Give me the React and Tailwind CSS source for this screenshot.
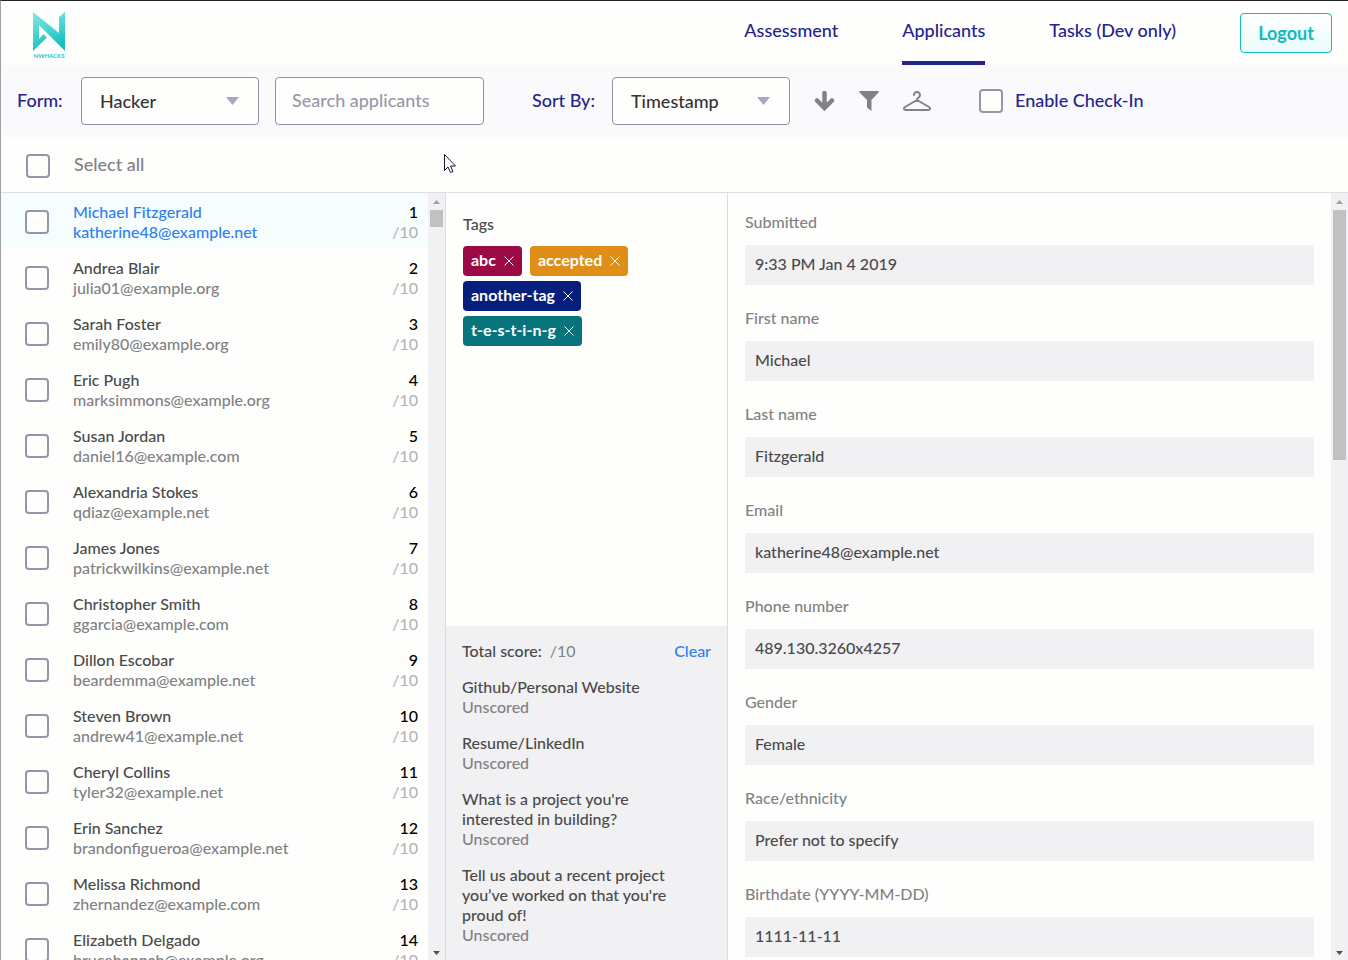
import React, { useState } from "react";

const applicants = [
  { name: "Michael Fitzgerald", email: "katherine48@example.net" },
  { name: "Andrea Blair", email: "julia01@example.org" },
  { name: "Sarah Foster", email: "emily80@example.org" },
  { name: "Eric Pugh", email: "marksimmons@example.org" },
  { name: "Susan Jordan", email: "daniel16@example.com" },
  { name: "Alexandria Stokes", email: "qdiaz@example.net" },
  { name: "James Jones", email: "patrickwilkins@example.net" },
  { name: "Christopher Smith", email: "ggarcia@example.com" },
  { name: "Dillon Escobar", email: "beardemma@example.net" },
  { name: "Steven Brown", email: "andrew41@example.net" },
  { name: "Cheryl Collins", email: "tyler32@example.net" },
  { name: "Erin Sanchez", email: "brandonfigueroa@example.net" },
  { name: "Melissa Richmond", email: "zhernandez@example.com" },
  { name: "Elizabeth Delgado", email: "brucehannah@example.org" },
];

const tags = [
  { label: "abc", color: "bg-[#9b0a45]" },
  { label: "accepted", color: "bg-[#df8f18]" },
  { label: "another-tag", color: "bg-[#061f7c]" },
  { label: "t-e-s-t-i-n-g", color: "bg-[#06747a]" },
];

const questions = [
  "Github/Personal Website",
  "Resume/LinkedIn",
  "What is a project you're interested in building?",
  "Tell us about a recent project you’ve worked on that you're proud of!",
];

const fields = [
  { id: "submitted", label: "Submitted", value: "9:33 PM Jan 4 2019" },
  { id: "firstName", label: "First name", value: "Michael" },
  { id: "lastName", label: "Last name", value: "Fitzgerald" },
  { id: "email", label: "Email", value: "katherine48@example.net" },
  { id: "phone", label: "Phone number", value: "489.130.3260x4257" },
  { id: "gender", label: "Gender", value: "Female" },
  { id: "race", label: "Race/ethnicity", value: "Prefer not to specify" },
  { id: "birthdate", label: "Birthdate (YYYY-MM-DD)", value: "1111-11-11" },
];

function Logo() {
  return (
    <svg width="34" height="48" viewBox="0 0 34 48" aria-label="nwHacks">
      <defs>
        <linearGradient id="logo" x1="0" y1="0" x2="0.3" y2="1">
          <stop offset="0" stopColor="#84e6e3" />
          <stop offset="0.5" stopColor="#4fd6d5" />
          <stop offset="1" stopColor="#14bfc0" />
        </linearGradient>
      </defs>
      <path
        fill="url(#logo)"
        d="M1 0L27 21V5L33 0V39L7 13V27L11.500 22L15 25.500L1 39Z"
      />
      <text
        x="17"
        y="46"
        textAnchor="middle"
        fontSize="6"
        fontWeight="700"
        fill="#2cc5c5"
      >
        NWHACKS
      </text>
    </svg>
  );
}

function Checkbox({ id, label }) {
  return (
    <input
      id={id}
      type="checkbox"
      aria-label={label}
      className="h-6 w-6 shrink-0 appearance-none rounded border-2 border-[#9496aa] bg-[#fefefd] checked:bg-[#23238e]"
    />
  );
}

function Dropdown({ id, options }) {
  return (
    <div className="relative">
      <select
        id={id}
        className="h-12 w-[178px] appearance-none rounded border border-[#8f91ac] bg-[#fefefd] pl-[18px] text-lg text-[#333]"
      >
        {options.map((option) => (
          <option key={option}>{option}</option>
        ))}
      </select>
      <svg
        className="pointer-events-none absolute top-5 right-5"
        width="13"
        height="8"
        viewBox="0 0 13 8"
        fill="#a5a7c0"
      >
        <path d="M0 0h13L6.500 8z" />
      </svg>
    </div>
  );
}

function Scrollbar({ thumb }) {
  return (
    <div className="flex w-[17px] shrink-0 flex-col items-center bg-[#f1f1f3]">
      <div className="flex h-[17px] items-center">
        <svg width="7" height="4" viewBox="0 0 7 4" fill="#a0a0a0">
          <path d="M0 4h7L3.500 0z" />
        </svg>
      </div>
      <div className={"w-[13px] bg-[#c1c1c3] " + thumb} />
      <div className="mt-auto flex h-[15px] items-center">
        <svg width="7" height="4" viewBox="0 0 7 4" fill="#505050">
          <path d="M0 0h7L3.500 4z" />
        </svg>
      </div>
    </div>
  );
}

function Header() {
  const link = "flex h-16 border-b-4 pt-[15px] leading-7";
  return (
    <header className="flex h-16 shrink-0 justify-between pr-4 pl-[31px]">
      <a href="#home" className="pt-[11px]">
        <Logo />
      </a>
      <div className="flex gap-16">
        <nav className="flex gap-16 text-lg text-[#23238e]">
          <a href="#assessment" className={link + " border-transparent"}>
            Assessment
          </a>
          <a href="#applicants" className={link + " border-[#23238e]"}>
            Applicants
          </a>
          <a href="#tasks" className={link + " border-transparent"}>
            Tasks (Dev only)
          </a>
        </nav>
        <button className="mt-3 h-10 w-[92px] rounded border border-[#12bcbc] bg-linear-to-b from-white to-[#e9fcfb] text-lg font-bold text-[#12bcbc]">
          Logout
        </button>
      </div>
    </header>
  );
}

function Toolbar() {
  return (
    <div className="flex h-[72px] shrink-0 items-center bg-[#fafafd] pl-4 text-lg text-[#23238e]">
      <label htmlFor="form" className="w-16 pb-0.5">
        Form:
      </label>
      <Dropdown id="form" options={["Hacker", "Mentor", "Volunteer"]} />
      <input
        type="text"
        aria-label="Search applicants"
        placeholder="Search applicants"
        className="ml-4 h-12 w-[209px] rounded border border-[#8f91ac] bg-[#fefefd] px-4 pb-0.5 text-lg placeholder:text-[#9798a8]"
      />
      <label htmlFor="sort" className="ml-12 w-20 pb-0.5">
        Sort By:
      </label>
      <Dropdown id="sort" options={["Timestamp", "Name", "Email"]} />
      <div className="ml-6 flex items-center gap-6 text-[#828284]">
        <button aria-label="Sort direction">
          <svg width="21" height="20" viewBox="0 0 21 20" fill="none">
            <path
              d="M10.500 2v14M3 9.500l7.500 7.500 7.500-7.500"
              stroke="currentColor"
              strokeWidth="4.500"
              strokeLinecap="round"
            />
          </svg>
        </button>
        <button aria-label="Filter">
          <svg width="20" height="20" viewBox="0 0 20 20" fill="currentColor">
            <path d="M1 0h18c.8 0 1 .9.500 1.400L12.500 9v11L8 16.500V9L.5 1.400C0 .9.200 0 1 0z" />
          </svg>
        </button>
        <button aria-label="Coat check">
          <svg
            width="28"
            height="20"
            viewBox="0 0 28 20"
            fill="none"
            stroke="currentColor"
            strokeWidth="2"
            strokeLinecap="round"
            strokeLinejoin="round"
          >
            <path d="M11 4a3 3 0 1 1 4.500 2.600C14.400 7.200 14 7.800 14 9L2 16c-1.600 1-1.200 3 .6 3h22.800c1.800 0 2.200-2 .6-3L14 9" />
          </svg>
        </button>
      </div>
      <div className="ml-12 flex items-center gap-3">
        <Checkbox id="checkin" />
        <label htmlFor="checkin" className="pb-0.5">
          Enable Check-In
        </label>
      </div>
    </div>
  );
}

function ApplicantRow({ applicant, index, selected, onSelect }) {
  return (
    <li
      onClick={onSelect}
      className={
        "flex h-14 items-center pt-0.5 pr-[10px] pl-6 " +
        (selected ? "bg-[#f5fdfd]" : "")
      }
    >
      <Checkbox label={"Select " + applicant.name} />
      <div className="ml-6 grow">
        <div className={selected ? "text-[#2f7ff0]" : "text-[#4a4a4a]"}>
          {applicant.name}
        </div>
        <div className={selected ? "text-[#2f7ff0]" : "text-[#828284]"}>
          {applicant.email}
        </div>
      </div>
      <div className="text-right">
        <div className="text-black">{index + 1}</div>
        <div className="font-normal text-[#b0b0b2]">/10</div>
      </div>
    </li>
  );
}

function ReviewPanel() {
  return (
    <section className="flex w-[283px] shrink-0 flex-col border-x border-[#dddde1]">
      <div className="grow pt-[21px] pr-12 pl-[17px]">
        <h2 className="text-[#4a4a4a]">Tags</h2>
        <div className="mt-3 flex flex-wrap gap-x-2 gap-y-[5px]">
          {tags.map((tag) => (
            <span
              key={tag.label}
              className={
                "flex h-[30px] items-center gap-2 rounded px-2 font-bold text-white " +
                tag.color
              }
            >
              <span className="pb-0.5">{tag.label}</span>
              <button aria-label={"Remove " + tag.label}>
                <svg width="10" height="10" viewBox="0 0 10 10" stroke="#fff">
                  <path d="M.5 .5l9 9M9.500 .5l-9 9" />
                </svg>
              </button>
            </span>
          ))}
        </div>
      </div>
      <div className="flex flex-col gap-4 bg-[#f1f1f3] px-4 py-[15px] text-[#4a4a4a]">
        <div className="flex">
          <span>Total score:</span>
          <span className="ml-2 font-normal text-[#828284]">/10</span>
          <button className="ml-auto text-[#2f7ff0]">Clear</button>
        </div>
        {questions.map((question) => (
          <div key={question} className="pr-6">
            <div>{question}</div>
            <div className="text-[#828284]">Unscored</div>
          </div>
        ))}
      </div>
    </section>
  );
}

function Application() {
  return (
    <section className="flex min-w-0 grow">
      <form className="flex grow flex-col gap-[23px] overflow-hidden px-[17px] pt-[19px]">
        {fields.map((field) => (
          <div key={field.id} className="flex shrink-0 flex-col gap-[13px]">
            <label htmlFor={field.id} className="text-[#828284]">
              {field.label}
            </label>
            <input
              id={field.id}
              type="text"
              readOnly
              value={field.value}
              className="h-10 bg-[#f1f1f3] px-[10px] pb-1 text-[#4a4a4a]"
            />
          </div>
        ))}
      </form>
      <Scrollbar thumb="h-[250px]" />
    </section>
  );
}

function App() {
  const [selected, setSelected] = useState(0);

  return (
    <div className="relative flex h-screen flex-col overflow-hidden border-t border-l border-t-[#222] border-l-[#a0a0a4] bg-[#fefefd] font-['Lato',sans-serif] text-base leading-5 font-medium">
      <Header />
      <Toolbar />
      <div className="flex h-14 shrink-0 items-center gap-6 border-b border-[#dddde6] pt-0.5 pl-[25px] text-lg text-[#828284]">
        <Checkbox id="all" />
        <label htmlFor="all" className="pb-[3px]">
          Select all
        </label>
      </div>
      <main className="flex min-h-0 grow">
        <section className="flex w-[444px] shrink-0">
          <ul className="grow overflow-hidden">
            {applicants.map((applicant, index) => (
              <ApplicantRow
                key={applicant.email}
                applicant={applicant}
                index={index}
                selected={index === selected}
                onSelect={() => setSelected(index)}
              />
            ))}
          </ul>
          <Scrollbar thumb="h-[17px]" />
        </section>
        <ReviewPanel />
        <Application />
      </main>
      {/* pointer */}
      <svg
        className="pointer-events-none absolute top-[153px] left-[443px]"
        width="12"
        height="19"
        viewBox="0 0 12 19"
        fill="#fff"
        stroke="#1a1a2e"
      >
        <path d="M.5 .5v16l3.500-3.500 2.500 5.500 2.500-1-2.500-5.500h5z" />
      </svg>
    </div>
  );
}

export default App;
